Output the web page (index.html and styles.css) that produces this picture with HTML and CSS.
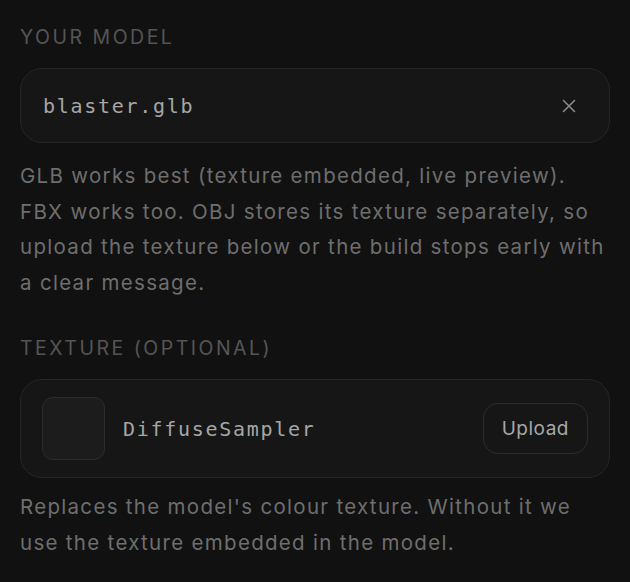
FILE: index.html
```html
<!DOCTYPE html>
<html lang="en">
<head>
<meta charset="utf-8">
<title>Model upload</title>
<link rel="stylesheet" href="styles.css">
</head>
<body>
<main class="panel">
  <section class="field">
    <div class="label">YOUR MODEL</div>
    <div class="file-box">
      <span class="mono file-name">blaster.glb</span>
      <button class="clear" aria-label="Remove file">
        <svg viewBox="0 0 16 16" width="16" height="16"><path d="M2.5 2.5 L13.5 13.5 M13.5 2.5 L2.5 13.5" stroke="#8a8a8a" stroke-width="1.6" stroke-linecap="round" fill="none"/></svg>
      </button>
    </div>
    <p class="help">GLB works best (texture embedded, live preview). FBX works too. OBJ stores its texture separately, so upload the texture below or the build stops early with a clear message.</p>
  </section>
  <section class="field">
    <div class="label">TEXTURE (OPTIONAL)</div>
    <div class="texture-box">
      <div class="swatch"></div>
      <span class="mono tex-name">DiffuseSampler</span>
      <button class="upload">Upload</button>
    </div>
    <p class="help help-tight">Replaces the model's colour texture. Without it we use the texture embedded in the model.</p>
  </section>
</main>
</body>
</html>
```
FILE: styles.css
```css
html, body {
  margin: 0;
  padding: 0;
  background: #111111;
}
body {
  font-family: Inter, "Noto Sans", sans-serif;
  color: #6f6f6f;
}
.panel {
  padding: 26px 20px 0 20px;
  display: flex;
  flex-direction: column;
  gap: 37px;
}
.field {
  display: flex;
  flex-direction: column;
}
.label {
  font-size: 19.5px;
  letter-spacing: 2.5px;
  color: #555555;
  line-height: 22px;
  margin-bottom: 20px;
}
.mono {
  font-family: "DejaVu Sans Mono", monospace;
  color: #a6a6a6;
  font-size: 20px;
  letter-spacing: 1.7px;
}
.file-box {
  height: 75px;
  box-sizing: border-box;
  border: 1.5px solid #262626;
  border-radius: 22px;
  background: #161616;
  display: flex;
  align-items: center;
  justify-content: space-between;
  padding: 0 32px 0 22px;
}
.clear {
  background: none;
  border: none;
  padding: 0;
  display: flex;
  cursor: pointer;
}
.help {
  margin: 15px -4px 0 0;
  font-size: 20.5px;
  line-height: 35.5px;
  letter-spacing: 1.3px;
  color: #6e6e6e;
}
.help-tight {
  margin-top: 11px;
}
.texture-box {
  height: 99px;
  box-sizing: border-box;
  border: 1.5px solid #262626;
  border-radius: 22px;
  background: #161616;
  display: flex;
  align-items: center;
  padding: 0 21px 0 21px;
}
.swatch {
  width: 63px;
  height: 63px;
  box-sizing: border-box;
  border-radius: 11px;
  background: #1c1c1c;
  border: 1.5px solid #2c2c2c;
  flex: none;
}
.tex-name {
  margin-left: 18px;
  flex: 1;
}
.upload {
  font-family: Inter, "Noto Sans", sans-serif;
  font-size: 19px;
  letter-spacing: 0.5px;
  color: #a8a8a8;
  background: #161616;
  border: 1.5px solid #2c2c2c;
  border-radius: 15px;
  height: 51px;
  padding: 0 18px;
  cursor: pointer;
}
```
